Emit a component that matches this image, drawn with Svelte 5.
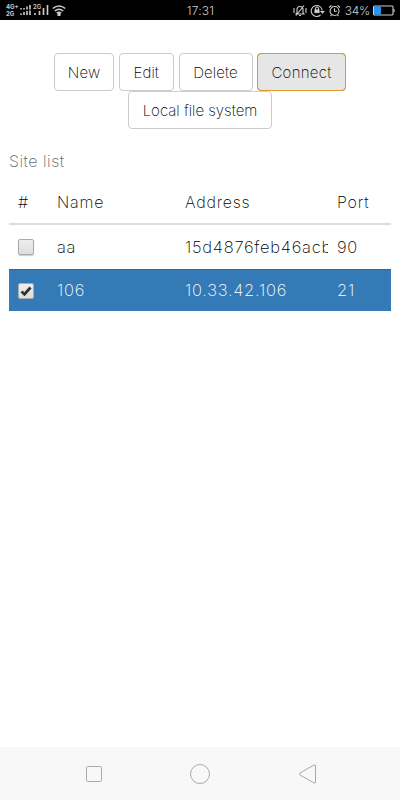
<script>
  let sites = $state([
    { name: 'aa', address: '15d4876feb46acb', port: 90, selected: false },
    { name: '106', address: '10.33.42.106', port: 21, selected: true }
  ]);

  const actions = ['New', 'Edit', 'Delete', 'Connect'];
  let focused = $state('Connect');
</script>

<div class="screen">
  <header class="status">
    <div class="left">
      <div class="network"><span>4G+</span><span>2G</span></div>
      <svg class="bars" width="12" height="12" viewBox="0 0 12 12">
        <path d="M2 4v1.500M2 9.500v1.500M5 4v1.500M5 8v3M8 2.500v3M8 7v4M11 1v4.500M11 6.500v4.500" />
      </svg>
      <svg class="cell" width="16" height="12" viewBox="0 0 16 12">
        <text x="0" y="5">2G</text>
        <path d="M2 9v2M6.500 7v4M10.500 4v7M14.500 1v10" />
      </svg>
      <svg class="wifi" width="14" height="11" viewBox="0 0 14 11">
        <path d="M.7 3.500Q7-1.500 13.300 3.500M2.700 6Q7 2.500 11.300 6M4.700 8.100Q7 6.300 9.300 8.100" />
        <circle cx="7" cy="9.500" r="1" />
      </svg>
    </div>
    <time>17:31</time>
    <div class="right">
      <svg width="14" height="13" viewBox="0 0 14 13">
        <path d="M4 9V5.500Q4 2.500 7 2.500T10 5.500V9L11 10H3ZM6 11.500h2M3 11.500l8-10M1 4v5M13 4v5" />
      </svg>
      <svg width="15" height="13" viewBox="0 0 15 13">
        <path d="M10.500 11A5.500 5.500 0 1 1 12.200 6.500M11.200 7.500h2.600l-1.300 1.500zM5.500 6V4.500a1.500 1.500 0 0 1 3 0V6" />
        <rect x="5" y="6" width="4" height="2.500" />
      </svg>
      <svg width="13" height="13" viewBox="0 0 13 13">
        <circle class="outline" cx="6.500" cy="7" r="4.500" />
        <path d="M6.500 4.300V7.300H9M1 3.500 3.500 1.300M9.500 1.300 12 3.500M3.500 11 2.500 12M9.500 11l1 1" />
      </svg>
      <span>34%</span>
      <svg width="22" height="11" viewBox="0 0 22 11">
        <rect class="outline" x=".5" y="1" width="19.500" height="9" rx="1" />
        <rect class="charge" x="1" y="1.500" width="7" height="8" />
        <path d="M21 4v3" />
      </svg>
    </div>
  </header>

  <main>
    <div class="toolbar">
      {#each actions as action}
        <button class="btn {action.toLowerCase()}" class:focused={focused === action} onclick={() => (focused = action)}>{action}</button>
      {/each}
      <button class="btn local">Local file system</button>
    </div>

    <table>
      <caption>Site list</caption>
      <thead>
        <tr><th class="check">#</th><th class="name">Name</th><th class="address">Address</th><th>Port</th></tr>
      </thead>
      <tbody>
        {#each sites as site}
          <tr class:selected={site.selected}>
            <td class="check">
              <button class="checkbox" role="checkbox" aria-checked={site.selected} aria-label={site.name} onclick={() => (site.selected = !site.selected)}>
                {#if site.selected}
                  <svg width="12" height="12" viewBox="0 0 12 12"><path d="M1.500 6.500 4.500 9.300 10.500 2.500" /></svg>
                {/if}
              </button>
            </td>
            <td>{site.name}</td>
            <td class="host"><div>{site.address}</div></td>
            <td>{site.port}</td>
          </tr>
        {/each}
      </tbody>
    </table>
  </main>

  <nav>
    <svg width="18" height="18" viewBox="0 0 18 18"><rect x="2.500" y="1.500" width="15" height="15" rx="1" /></svg>
    <svg width="20" height="20" viewBox="0 0 20 20"><circle cx="10" cy="10" r="9.500" /></svg>
    <svg width="18" height="20" viewBox="0 0 18 20"><path d="M16 1 2 9Q.8 10 2 11L16 19Q17.500 19.500 17.500 18V2Q17.500 .5 16 1Z" /></svg>
  </nav>
</div>

<style>
  :global(body) {
    background: #fff;
  }
  .screen {
    width: 400px;
    height: 800px;
    display: flex;
    flex-direction: column;
    overflow: hidden;
    font-family: Inter, "Liberation Sans", sans-serif;
    font-weight: 200;
    font-size: 16px;
    color: #000;
  }
  .status {
    height: 20px;
    display: grid;
    grid-template-columns: 1fr auto 1fr;
    align-items: center;
    background: #000;
    color: #ccc;
    padding: 0 5px 0 6px;
    box-sizing: border-box;
    font-size: 12px;
    font-weight: 300;
  }
  .left,
  .right {
    display: flex;
    align-items: center;
  }
  .right {
    justify-content: flex-end;
    gap: 3px;
  }
  .right span {
    margin: 0 0 0 1px;
    letter-spacing: -0.3px;
  }
  .status svg {
    fill: none;
    stroke: #ccc;
    stroke-width: 1.1;
  }
  .status time {
    letter-spacing: 0.2px;
  }
  .network {
    width: 13px;
    display: grid;
    grid-template-rows: 7px 7px;
    font-size: 6px;
    line-height: 7px;
    font-weight: 700;
  }
  .status .bars,
  .status .cell path {
    stroke-width: 1.6;
  }
  .cell {
    margin: 0 3px 0 2px;
  }
  .cell text {
    font-size: 6px;
    font-weight: 600;
    fill: #ccc;
    stroke: none;
  }
  .status .wifi {
    stroke-width: 1.5;
  }
  .status rect,
  .status circle {
    fill: #ccc;
  }
  .status .outline {
    fill: none;
  }
  .status .charge {
    fill: #2497f3;
    stroke: none;
  }
  main {
    flex: 1;
    padding: 33px 9px 0;
  }
  .toolbar {
    display: flex;
    flex-wrap: wrap;
    justify-content: center;
    column-gap: 4.5px;
    padding: 0 20px;
  }
  .btn {
    height: 38px;
    box-sizing: border-box;
    padding: 0;
    border: 1px solid #ccc;
    border-radius: 4px;
    background: #fff;
    color: #000;
    font: inherit;
    font-size: 15px;
    letter-spacing: 0.1px;
  }
  .new {
    width: 60px;
  }
  .edit {
    width: 55.5px;
  }
  .delete {
    width: 74px;
  }
  .connect {
    width: 89px;
    letter-spacing: 0.3px;
  }
  .local {
    width: 144px;
    letter-spacing: 0;
  }
  .btn.focused {
    background: #e6e6e6;
    border-color: #adadad;
    outline: 1px solid #e19a2c;
    outline-offset: -1px;
  }
  table {
    width: 382px;
    margin-top: 14px;
    border-collapse: collapse;
    table-layout: fixed;
  }
  caption {
    height: 38px;
    line-height: 36px;
    text-align: left;
    letter-spacing: 0.5px;
    color: #666;
  }
  th,
  td {
    padding: 0 0 0 9px;
    text-align: left;
    font-weight: 200;
    letter-spacing: 0.8px;
  }
  th {
    height: 42px;
    border-bottom: 2px solid #ddd;
  }
  td {
    height: 45px;
    box-sizing: border-box;
    border-top: 1px solid #ddd;
    font-size: 16.5px;
    letter-spacing: 0.75px;
  }
  .check {
    width: 30px;
  }
  .name {
    width: 119px;
  }
  .address {
    width: 143px;
  }
  .host div {
    width: 143px;
    overflow: hidden;
    white-space: nowrap;
  }
  .selected td {
    height: 42px;
    background: #337ab7;
    border-color: #1b6db0;
    color: #fff;
  }
  .checkbox {
    display: block;
    width: 16px;
    height: 16px;
    margin-top: 1px;
    padding: 1px;
    border: 1px solid #aaa;
    border-radius: 2px;
    background: linear-gradient(#eee, #ddd);
    box-shadow: 0 1px 1px #ccc;
  }
  .checkbox svg {
    display: block;
    fill: none;
    stroke: #333;
    stroke-width: 2.8;
  }
  .selected .checkbox {
    box-shadow: none;
  }
  nav {
    height: 53px;
    display: flex;
    align-items: center;
    justify-content: space-between;
    padding: 0 84px;
    background: #f8f8f8;
  }
  nav svg {
    fill: none;
    stroke: #aaa;
  }
</style>
